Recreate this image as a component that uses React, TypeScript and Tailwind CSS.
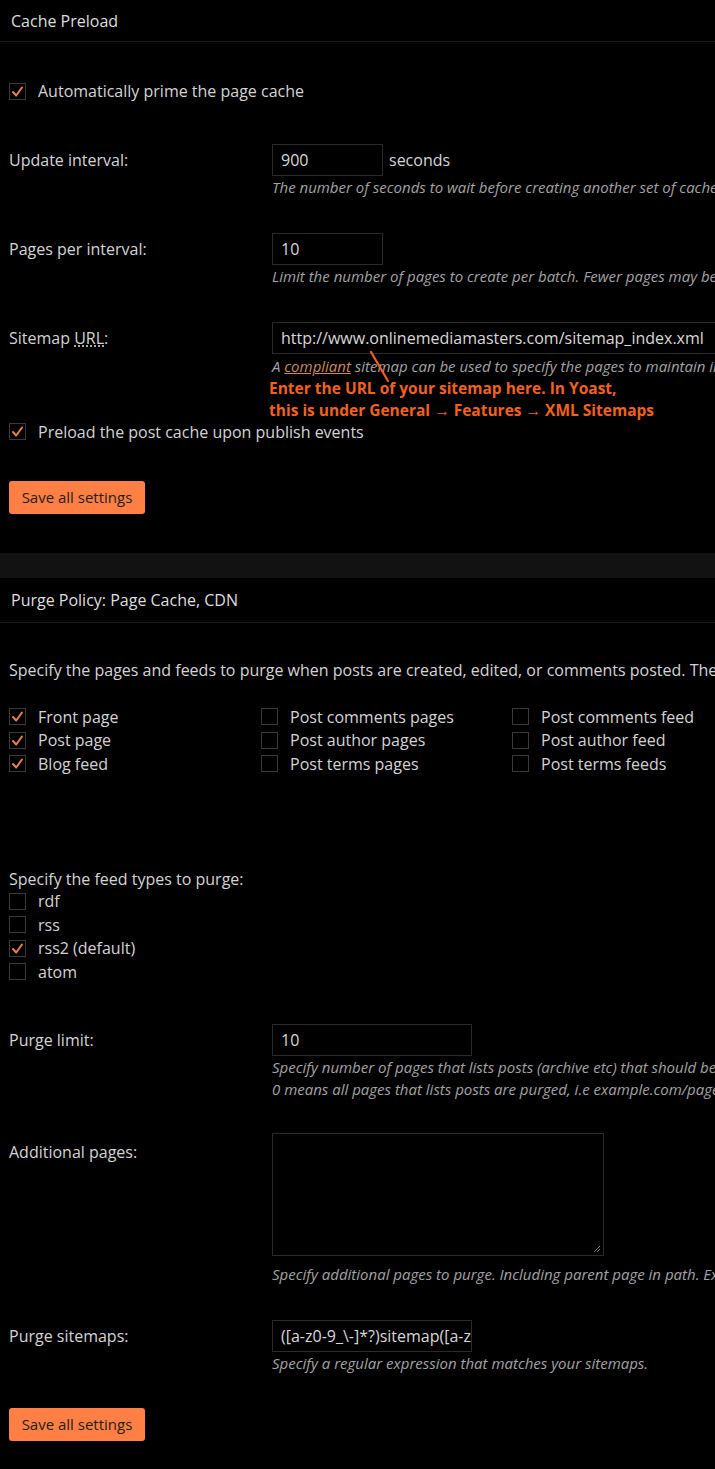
import React from "react";

const font = "font-['Open_Sans','Noto_Sans',sans-serif]";

function Check({ checked }: { checked?: boolean }) {
  return (
    <span className="w-[17px] h-[17px] border border-[#3a3a3a] bg-black flex items-center justify-center shrink-0">
      {checked && (
        <svg width="13" height="13" viewBox="0 0 13 13">
          <path d="M2 7 L5.2 10.5 L11 2.5" fill="none" stroke="#e8834a" strokeWidth="2" strokeLinecap="round" strokeLinejoin="round" />
        </svg>
      )}
    </span>
  );
}

function CheckRow({ label, checked, h = "h-[23.5px]" }: { label: string; checked?: boolean; h?: string }) {
  return (
    <div className={`flex items-center gap-3 whitespace-nowrap ${h}`}>
      <Check checked={checked} />
      <span>{label}</span>
    </div>
  );
}

function Desc({ children, mt = "" }: { children: React.ReactNode; mt?: string }) {
  return <p className={`italic text-[15px] leading-[22px] text-[#a3a3a3] whitespace-nowrap ${mt}`}>{children}</p>;
}

function Input({ value, w }: { value: string; w: string }) {
  return (
    <div className={`h-[32px] border border-[#2b2b2b] bg-black px-2 flex items-center text-[#d8d8d8] whitespace-nowrap overflow-hidden ${w}`}>
      {value}
    </div>
  );
}

function Row({ label, children, mt }: { label: React.ReactNode; children: React.ReactNode; mt: string }) {
  return (
    <div className={`grid grid-cols-[263px_1fr] ${mt}`}>
      <div className="h-[32px] flex items-center">{label}</div>
      <div>{children}</div>
    </div>
  );
}

function SaveButton({ mt }: { mt: string }) {
  return (
    <button className={`${mt} h-[33px] w-[136px] bg-[#ff7f45] rounded-[3px] text-[#1e1e1e] text-[15px] flex items-center justify-center`}>
      Save all settings
    </button>
  );
}

export default function App() {
  return (
    <div className={`w-[715px] h-[1469px] overflow-hidden bg-black text-[#d4d4d4] text-[16px] ${font}`}>
      {/* Cache Preload */}
      <div className="h-[42px] border-b border-[#1b1b1b] px-[11px] flex items-center text-[#dedede]">Cache Preload</div>
      <div className="px-[9px]">
        <div className="mt-[37px]">
          <CheckRow label="Automatically prime the page cache" checked h="h-[24px]" />
        </div>

        <Row label="Update interval:" mt="mt-[41px]">
          <div className="flex items-center gap-[6px]">
            <Input value="900" w="w-[111px]" />
            <span>seconds</span>
          </div>
          <Desc>The number of seconds to wait before creating another set of cached pages.</Desc>
        </Row>

        <Row label="Pages per interval:" mt="mt-[35px]">
          <Input value="10" w="w-[111px]" />
          <Desc>Limit the number of pages to create per batch. Fewer pages may be better for under-powered servers.</Desc>
        </Row>

        <Row
          label={
            <span>
              Sitemap <span className="underline decoration-dotted underline-offset-2">URL</span>:
            </span>
          }
          mt="mt-[35px]"
        >
          <div className="relative">
            <Input value="http://www.onlinemediamasters.com/sitemap_index.xml" w="w-[460px]" />
            <Desc mt="mt-[1px]">
              A <span className="underline text-[#c98a5f]">compliant</span> sitemap can be used to specify the pages to maintain in the primed cache.
            </Desc>
            <div className="-ml-[3px] text-[#f2611f] font-bold text-[15.5px] leading-[22px] whitespace-nowrap">
              <p>Enter the URL of your sitemap here. In Yoast,</p>
              <p>this is under General → Features → XML Sitemaps</p>
            </div>
            <svg className="absolute left-[96px] top-[28px]" width="24" height="34" viewBox="0 0 24 34">
              <path d="M3 2 L20 31" stroke="#f2611f" strokeWidth="2.2" strokeLinecap="round" />
            </svg>
          </div>
        </Row>

        <CheckRow label="Preload the post cache upon publish events" checked h="h-[21px]" />

        <SaveButton mt="mt-[39px]" />
      </div>

      {/* separator */}
      <div className="mt-[39px] h-[25px] bg-[#121212]" />

      {/* Purge Policy */}
      <div className="h-[45px] border-b border-[#1b1b1b] px-[11px] flex items-center text-[#dedede]">Purge Policy: Page Cache, CDN</div>
      <div className="px-[9px]">
        <p className="mt-[36px] h-[22px] leading-[22px] whitespace-nowrap">
          Specify the pages and feeds to purge when posts are created, edited, or comments posted. The defaults are recommended because additional options may reduce server performance:
        </p>

        <div className="mt-[24px] grid grid-cols-[252px_251px_1fr]">
          <div>
            <CheckRow label="Front page" checked />
            <CheckRow label="Post page" checked />
            <CheckRow label="Blog feed" checked />
          </div>
          <div>
            <CheckRow label="Post comments pages" />
            <CheckRow label="Post author pages" />
            <CheckRow label="Post terms pages" />
          </div>
          <div>
            <CheckRow label="Post comments feed" />
            <CheckRow label="Post author feed" />
            <CheckRow label="Post terms feeds" />
          </div>
        </div>

        <p className="mt-[92px] h-[22px] leading-[22px]">Specify the feed types to purge:</p>
        <CheckRow label="rdf" />
        <CheckRow label="rss" />
        <CheckRow label="rss2 (default)" checked />
        <CheckRow label="atom" />

        <Row label="Purge limit:" mt="mt-[40px]">
          <Input value="10" w="w-[200px]" />
          <Desc>Specify number of pages that lists posts (archive etc) that should be purged on post updates etc, i.e example.com/ ... example.com/page/5.</Desc>
          <Desc>0 means all pages that lists posts are purged, i.e example.com/page/2 ... .</Desc>
        </Row>

        <div className="grid grid-cols-[263px_1fr] mt-[33px]">
          <div className="h-[38px] flex items-center">Additional pages:</div>
          <div>
            <div className="relative w-[332px] h-[123px] border border-[#2b2b2b] bg-black">
              <svg className="absolute right-[2px] bottom-[2px]" width="9" height="9" viewBox="0 0 9 9">
                <path d="M8 2 L2 8 M8 5 L5 8" stroke="#777" strokeWidth="1" />
              </svg>
            </div>
            <Desc mt="mt-[7px]">Specify additional pages to purge. Including parent page in path. Ex: parent/posts.</Desc>
          </div>
        </div>

        <Row label="Purge sitemaps:" mt="mt-[35px]">
          <Input value="([a-z0-9_\-]*?)sitemap([a-z0-9_\-]*)?\.xml" w="w-[200px]" />
          <Desc>Specify a regular expression that matches your sitemaps.</Desc>
        </Row>

        <SaveButton mt="mt-[34px]" />
      </div>
    </div>
  );
}
